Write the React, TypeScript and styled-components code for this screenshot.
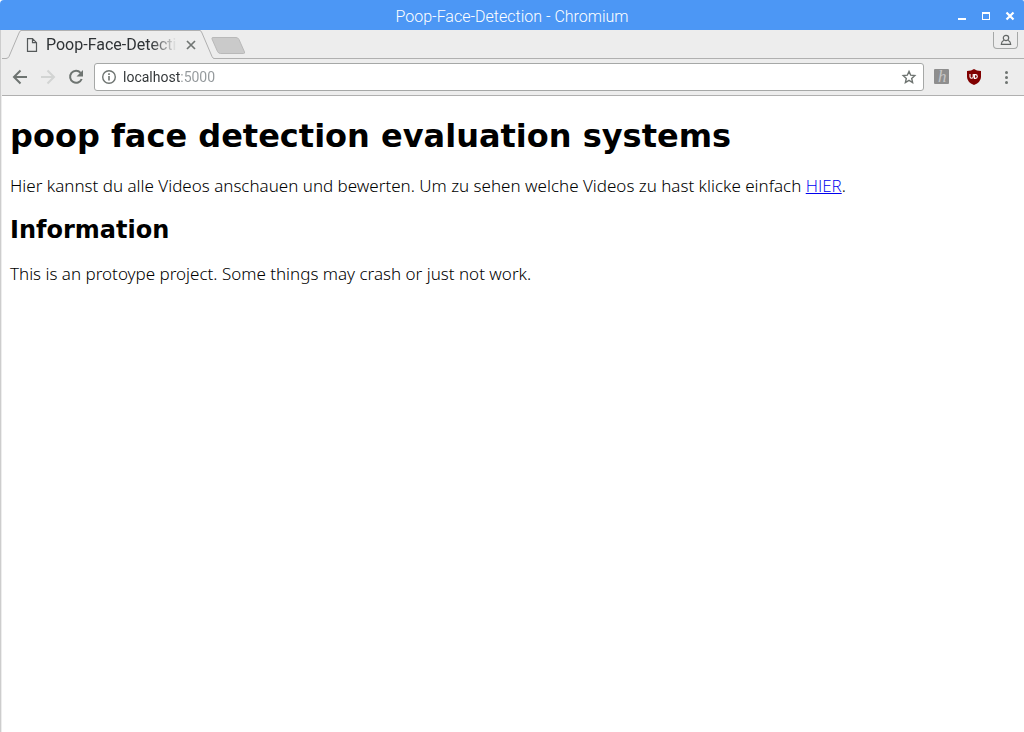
import React from "react";
import styled, { createGlobalStyle } from "styled-components";

const chrome = "#ededed";
const line = "#b0b0b0";
const icon = "#6e7471";

const GlobalStyle = createGlobalStyle`
  * { box-sizing: border-box; }
  html, body, #root { height: 100%; }
  body { margin: 0; background: #fff; }
  button { padding: 0; border: 0; background: none; display: flex; align-items: center; justify-content: center; }
  svg { display: block; }
`;

const Window = styled.div`
  min-height: 100%;
  display: flex;
  flex-direction: column;
  background: #fff;
`;

const TitleBar = styled.header`
  height: 30px;
  display: grid;
  grid-template-columns: 1fr auto 1fr;
  align-items: center;
  background: #4c97f5;
  color: #fff;
  border-radius: 4px 2px 0 0;
`;

const WindowTitle = styled.div`
  grid-column: 2;
  padding-top: 4px;
  font: 300 16px/20px Roboto, sans-serif;
`;

const WindowControls = styled.div`
  display: flex;
  justify-content: flex-end;
  gap: 8px;
  padding: 0 6px 0 0;
`;

const WindowButton = styled.button`
  width: 16px;
  height: 16px;
  color: #fff;
`;

const Frame = styled.div`
  flex: 1;
  display: flex;
  flex-direction: column;
  padding-left: 1px;
  border-left: 1px solid #cdcdcd;
  background: #ededed;
`;

const TabStrip = styled.nav`
  height: 29px;
  display: flex;
  background: ${chrome};
  box-shadow: inset 0 -1px ${line};
`;

const Tab = styled.div`
  display: flex;
  height: 29px;
`;

const TabBody = styled.div`
  width: 179px;
  display: flex;
  align-items: center;
  padding: 0 3px 0 4px;
  border-top: 1px solid ${line};
  background: ${chrome};
`;

const TabTitle = styled.span`
  flex: 1;
  margin-left: 8px;
  overflow: hidden;
  white-space: nowrap;
  color: #2f3336;
  font: 400 16px/20px Roboto, sans-serif;
  mask-image: linear-gradient(to right, #000 80%, transparent);
`;

const TabClose = styled.button`
  width: 12px;
  height: 12px;
  margin: 0 0 0 8px;
`;

const NewTab = styled.button`
  width: 36px;
  height: 20px;
  margin: 6px 0 0 -4px;
`;

const ProfileButton = styled.button`
  width: 25px;
  height: 17px;
  margin: 2px 6px 0 auto;
  border: 1px solid #a6a8a7;
  border-top: 0;
  border-radius: 0 0 4px 4px;
`;

const Toolbar = styled.div`
  height: 37px;
  display: flex;
  align-items: center;
  padding: 0 8px;
  background: ${chrome};
  border-bottom: 1px solid ${line};
`;

const ToolGroup = styled.div<{ $gap: number }>`
  display: flex;
  gap: ${(p) => p.$gap}px;
`;

const ToolButton = styled.button`
  width: 20px;
  height: 20px;
`;

const AddressBar = styled.form`
  flex: 1;
  height: 28px;
  margin: 0 8px;
  padding: 0 4px 0 6px;
  display: flex;
  align-items: center;
  background: #fff;
  border: 1px solid #a6a8a7;
  border-radius: 3px;
`;

const AddressInput = styled.input`
  flex: 1;
  min-width: 0;
  height: 20px;
  margin: 0 4px 0 6px;
  padding: 0;
  border: 0;
  outline: 0;
  font: 400 14px/20px Roboto, sans-serif;
  color: #303436;
  background: linear-gradient(to right, #303436 58px, #93989b 58px);
  background-clip: text;
  -webkit-text-fill-color: transparent;
`;

const Page = styled.main`
  flex: 1;
  padding: 20px 8px;
  background: #fff;
  color: #000;
  font: 300 17px/20px "Noto Sans", sans-serif;
`;

const Heading = styled.h1`
  margin: 0 0 20px;
  font: 700 32px/40px "DejaVu Sans", sans-serif;
`;

const SubHeading = styled.h2`
  margin: 20px 0;
  font: 700 24px/28px "DejaVu Sans", sans-serif;
`;

const Paragraph = styled.p`
  margin: 0;
`;

const Link = styled.a`
  color: #0000ee;
  font-family: "Open Sans", sans-serif;
`;

export default function App() {
  return (
    <Window>
      <GlobalStyle />
      <TitleBar>
        <WindowTitle>Poop-Face-Detection - Chromium</WindowTitle>
        <WindowControls>
          <WindowButton aria-label="Minimize">
            <svg width="16" height="16"><path d="M4 11h8v2H4z" fill="currentColor" /></svg>
          </WindowButton>
          <WindowButton aria-label="Maximize">
            <svg width="16" height="16" shapeRendering="crispEdges"><path d="M4 5h8v8H4zM5 7v5h6V7z" fillRule="evenodd" fill="currentColor" /></svg>
          </WindowButton>
          <WindowButton aria-label="Close">
            <svg width="16" height="16"><path d="M4.5 5.5l7 7M11.5 5.5l-7 7" stroke="currentColor" strokeWidth="2.2" /></svg>
          </WindowButton>
        </WindowControls>
      </TitleBar>
      <Frame>
        <TabStrip>
          <Tab>
            <svg width="19" height="29">
              <path d="M0 28.5H4Q6 28.5 7 26.5L17 3Q18 .5 19 .5V29H0z" fill={chrome} />
              <path d="M0 28.5H4Q6 28.5 7 26.5L17 3Q18 .5 19 .5" fill="none" stroke={line} />
            </svg>
            <TabBody>
              <svg width="13" height="14" fill="none" stroke="#55595a" strokeWidth="1.2">
                <path d="M2.5 .7h5l4 4v8.6h-9zM7.5 .7v4h4" />
              </svg>
              <TabTitle>Poop-Face-Detection</TabTitle>
              <TabClose aria-label="Close tab">
                <svg width="12" height="12"><path d="M2 2l8 8M10 2l-8 8" stroke="#707573" strokeWidth="1.7" /></svg>
              </TabClose>
            </TabBody>
            <svg width="14" height="29">
              <path d="M0 .5Q1 .5 2 3L12 26.5Q13 28.5 14 28.5V29H0z" fill={chrome} />
              <path d="M0 .5Q1 .5 2 3L12 26.5Q13 28.5 14 28.5" fill="none" stroke={line} />
            </svg>
          </Tab>
          <NewTab aria-label="New tab">
            <svg width="36" height="20">
              <path d="M3 1.5H26Q28 1.5 29 3.5L34.5 16Q35 17.5 33.5 17.5H10.5Q8.5 17.5 7.5 15.5L2 3Q1.5 1.5 3 1.5z" fill="#cacaca" stroke="#b9b9b9" />
            </svg>
          </NewTab>
          <ProfileButton aria-label="Profile">
            <svg width="12" height="12" fill="none" stroke="#626665" strokeWidth="1.2">
              <circle cx="6" cy="4" r="2.7" />
              <path d="M3.8 6.2C2 7.2 1.3 8.5 1.3 10.4h9.4C10.7 8.5 10 7.2 8.2 6.2" />
            </svg>
          </ProfileButton>
        </TabStrip>
        <Toolbar>
          <ToolGroup $gap={8}>
            <ToolButton aria-label="Back">
              <svg width="20" height="20" fill="none" stroke={icon} strokeWidth="2"><path d="M17 10H4M10.5 3.5L4 10l6.5 6.5" /></svg>
            </ToolButton>
            <ToolButton aria-label="Forward" disabled>
              <svg width="20" height="20" fill="none" stroke="#d2d4d3" strokeWidth="2"><path d="M3 10h13M9.5 3.5L16 10l-6.500 6.500" /></svg>
            </ToolButton>
            <ToolButton aria-label="Reload">
              <svg width="20" height="20"><path d="M14.6 5.8A6 6 0 1 0 15.7 12" fill="none" stroke={icon} strokeWidth="2" /><path d="M17 3v6.5h-6.5z" fill={icon} /></svg>
            </ToolButton>
          </ToolGroup>
          <AddressBar>
            <svg width="16" height="16"><circle cx="8" cy="8" r="6.3" fill="none" stroke={icon} strokeWidth="1.4" /><path d="M7.2 7h1.6v4.5H7.2zM7.2 4.3h1.6v1.6H7.2z" fill={icon} /></svg>
            <AddressInput aria-label="Address" defaultValue="localhost:5000" spellCheck={false} />
            <ToolButton type="button" aria-label="Bookmark this page">
              <svg width="20" height="20" fill="none" stroke={icon} strokeWidth="1.4"><path d="M10 4.4l1.7 3.8 4.1.4-3.100 2.800.9 4.100-3.600-2.200-3.600 2.200.9-4.100-3.100-2.800 4.100-.4z" /></svg>
            </ToolButton>
          </AddressBar>
          <ToolGroup $gap={12}>
            <ToolButton aria-label="Extension h">
              <svg width="20" height="20"><rect x="2" y="2" width="15" height="15" rx="1" fill="#8e8e8e" /><text x="6" y="15" fill="#c6c6c6" fontFamily="Liberation Serif, serif" fontStyle="italic" fontSize="17">h</text></svg>
            </ToolButton>
            <ToolButton aria-label="uBlock Origin">
              <svg width="20" height="20"><path d="M10 2Q12.5 4 17 4V10Q17 15 10 18Q3 15 3 10V4Q7.5 4 10 2z" fill="#800000" /><path d="M6 7v2.700a1.600 1.600 0 0 0 3.200 0V7M10.400 7.600v3.800h1a1.900 1.900 0 0 0 0-3.800z" fill="none" stroke="#fff" strokeWidth="1.1" /></svg>
            </ToolButton>
            <ToolButton aria-label="Menu">
              <svg width="20" height="20" fill={icon}><circle cx="10.5" cy="5.5" r="1.5" /><circle cx="10.5" cy="10.5" r="1.5" /><circle cx="10.5" cy="15.5" r="1.5" /></svg>
            </ToolButton>
          </ToolGroup>
        </Toolbar>
        <Page>
          <Heading>poop face detection evaluation systems</Heading>
          <Paragraph>
            Hier kannst du alle Videos anschauen und bewerten. Um zu sehen welche Videos zu hast klicke einfach <Link href="#videos">HIER</Link>.
          </Paragraph>
          <SubHeading>Information</SubHeading>
          <Paragraph>This is an protoype project. Some things may crash or just not work.</Paragraph>
        </Page>
      </Frame>
    </Window>
  );
}
